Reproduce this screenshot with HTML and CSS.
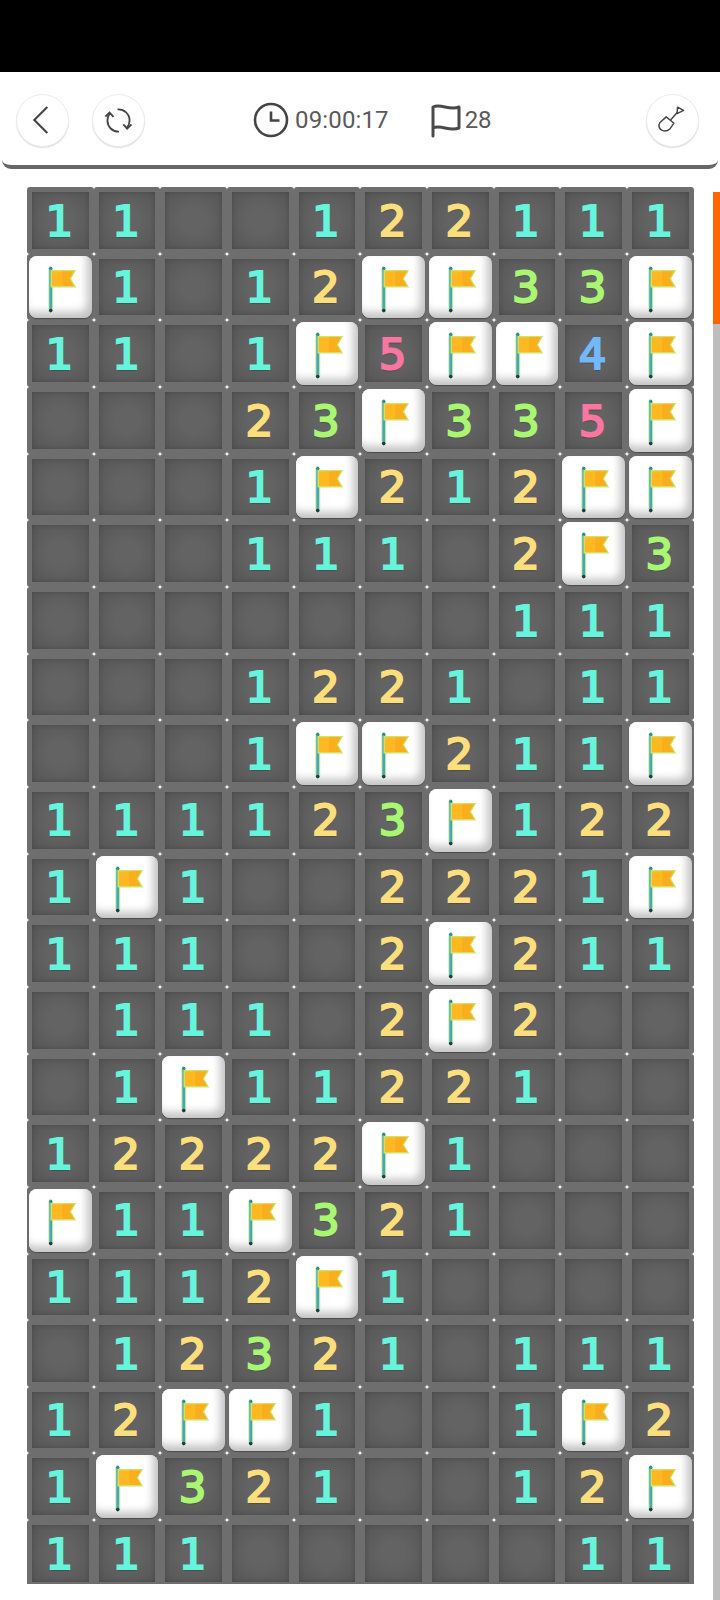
FILE: index.html
```html
<!DOCTYPE html>
<html lang="en">
<head>
<meta charset="utf-8">
<title>Minesweeper</title>
<link rel="stylesheet" href="styles.css">
</head>
<body>
<svg class="defs" width="0" height="0" aria-hidden="true">
  <symbol id="flag" viewBox="0 0 62 60">
    <path d="M21.500 11V53" class="flag-glow"/>
    <path d="M21.500 11V53" class="flag-pole"/>
    <circle cx="21.500" cy="53" r="1.800" fill="#1f3b3a"/>
    <circle cx="21.500" cy="11" r="1.600" fill="#2f8f86"/>
    <path d="M22 13.500H45.500L41 21.500L45.500 29.500H22Z" fill="#ffb81f" stroke="#cfe36a" stroke-width="1.400"/>
    <path d="M33 14.200H44.500L40 21.500L44.500 28.800H33Z" fill="#f9ae1d"/>
  </symbol>
</svg>
<div class="status-bar"></div>
<header class="toolbar">
  <button class="round-btn" aria-label="Back">
    <svg class="btn-icon" viewBox="0 0 53 53"><path d="M31.500 12.500L18 26L31.500 39.500"/></svg>
  </button>
  <button class="round-btn refresh" aria-label="Restart">
    <svg class="btn-icon thick" viewBox="0 0 53 53">
      <path d="M27 38C20 38.300 15 33 15 26.500C15 23.800 15.800 21.500 17.300 19.500"/>
      <path d="M12.800 22.500L17.200 18.300L21.300 22.800"/>
      <path d="M25.500 15C32.500 14.500 38 20 38 26.500C38 29.500 37 31.800 35.500 33.800"/>
      <path d="M40 30.500L35.500 35L31.500 30.500"/>
    </svg>
  </button>
  <div class="stats">
    <div class="stat">
      <svg class="clock" viewBox="0 0 36 36"><circle cx="18" cy="18" r="16"/><path d="M18 9.500V18.500H26.500"/></svg>
      <span>09:00:17</span>
    </div>
    <div class="stat">
      <svg class="flag-icon" viewBox="0 0 30 36"><path d="M2 34V5C10 1 18 9 28 5V26C18 30 10 22 2 26"/></svg>
      <span>28</span>
    </div>
  </div>
  <button class="round-btn shovel" aria-label="Dig">
    <svg class="btn-icon thin" viewBox="0 0 53 53">
      <path d="M20 22.700L13.500 28.500C11 32 13 36.500 17 37.300C20 37.800 22.500 36.500 24 35L28 29.300Z"/>
      <path d="M24.500 26L32 17.500"/>
      <path d="M31.700 12.700L38 16L31.300 19.300Z"/>
    </svg>
  </button>
</header>
<main class="game">
  <div class="board-wrap">
    <div class="board">
      <div class="cell n1">1</div><div class="cell n1">1</div><div class="cell"></div><div class="cell"></div><div class="cell n1">1</div><div class="cell n2">2</div><div class="cell n2">2</div><div class="cell n1">1</div><div class="cell n1">1</div><div class="cell n1">1</div>
      <div class="cell f"><svg class="tile"><use href="#flag"/></svg></div><div class="cell n1">1</div><div class="cell"></div><div class="cell n1">1</div><div class="cell n2">2</div><div class="cell f"><svg class="tile"><use href="#flag"/></svg></div><div class="cell f"><svg class="tile"><use href="#flag"/></svg></div><div class="cell n3">3</div><div class="cell n3">3</div><div class="cell f"><svg class="tile"><use href="#flag"/></svg></div>
      <div class="cell n1">1</div><div class="cell n1">1</div><div class="cell"></div><div class="cell n1">1</div><div class="cell f"><svg class="tile"><use href="#flag"/></svg></div><div class="cell n5">5</div><div class="cell f"><svg class="tile"><use href="#flag"/></svg></div><div class="cell f"><svg class="tile"><use href="#flag"/></svg></div><div class="cell n4">4</div><div class="cell f"><svg class="tile"><use href="#flag"/></svg></div>
      <div class="cell"></div><div class="cell"></div><div class="cell"></div><div class="cell n2">2</div><div class="cell n3">3</div><div class="cell f"><svg class="tile"><use href="#flag"/></svg></div><div class="cell n3">3</div><div class="cell n3">3</div><div class="cell n5">5</div><div class="cell f"><svg class="tile"><use href="#flag"/></svg></div>
      <div class="cell"></div><div class="cell"></div><div class="cell"></div><div class="cell n1">1</div><div class="cell f"><svg class="tile"><use href="#flag"/></svg></div><div class="cell n2">2</div><div class="cell n1">1</div><div class="cell n2">2</div><div class="cell f"><svg class="tile"><use href="#flag"/></svg></div><div class="cell f"><svg class="tile"><use href="#flag"/></svg></div>
      <div class="cell"></div><div class="cell"></div><div class="cell"></div><div class="cell n1">1</div><div class="cell n1">1</div><div class="cell n1">1</div><div class="cell"></div><div class="cell n2">2</div><div class="cell f"><svg class="tile"><use href="#flag"/></svg></div><div class="cell n3">3</div>
      <div class="cell"></div><div class="cell"></div><div class="cell"></div><div class="cell"></div><div class="cell"></div><div class="cell"></div><div class="cell"></div><div class="cell n1">1</div><div class="cell n1">1</div><div class="cell n1">1</div>
      <div class="cell"></div><div class="cell"></div><div class="cell"></div><div class="cell n1">1</div><div class="cell n2">2</div><div class="cell n2">2</div><div class="cell n1">1</div><div class="cell"></div><div class="cell n1">1</div><div class="cell n1">1</div>
      <div class="cell"></div><div class="cell"></div><div class="cell"></div><div class="cell n1">1</div><div class="cell f"><svg class="tile"><use href="#flag"/></svg></div><div class="cell f"><svg class="tile"><use href="#flag"/></svg></div><div class="cell n2">2</div><div class="cell n1">1</div><div class="cell n1">1</div><div class="cell f"><svg class="tile"><use href="#flag"/></svg></div>
      <div class="cell n1">1</div><div class="cell n1">1</div><div class="cell n1">1</div><div class="cell n1">1</div><div class="cell n2">2</div><div class="cell n3">3</div><div class="cell f"><svg class="tile"><use href="#flag"/></svg></div><div class="cell n1">1</div><div class="cell n2">2</div><div class="cell n2">2</div>
      <div class="cell n1">1</div><div class="cell f"><svg class="tile"><use href="#flag"/></svg></div><div class="cell n1">1</div><div class="cell"></div><div class="cell"></div><div class="cell n2">2</div><div class="cell n2">2</div><div class="cell n2">2</div><div class="cell n1">1</div><div class="cell f"><svg class="tile"><use href="#flag"/></svg></div>
      <div class="cell n1">1</div><div class="cell n1">1</div><div class="cell n1">1</div><div class="cell"></div><div class="cell"></div><div class="cell n2">2</div><div class="cell f"><svg class="tile"><use href="#flag"/></svg></div><div class="cell n2">2</div><div class="cell n1">1</div><div class="cell n1">1</div>
      <div class="cell"></div><div class="cell n1">1</div><div class="cell n1">1</div><div class="cell n1">1</div><div class="cell"></div><div class="cell n2">2</div><div class="cell f"><svg class="tile"><use href="#flag"/></svg></div><div class="cell n2">2</div><div class="cell"></div><div class="cell"></div>
      <div class="cell"></div><div class="cell n1">1</div><div class="cell f"><svg class="tile"><use href="#flag"/></svg></div><div class="cell n1">1</div><div class="cell n1">1</div><div class="cell n2">2</div><div class="cell n2">2</div><div class="cell n1">1</div><div class="cell"></div><div class="cell"></div>
      <div class="cell n1">1</div><div class="cell n2">2</div><div class="cell n2">2</div><div class="cell n2">2</div><div class="cell n2">2</div><div class="cell f"><svg class="tile"><use href="#flag"/></svg></div><div class="cell n1">1</div><div class="cell"></div><div class="cell"></div><div class="cell"></div>
      <div class="cell f"><svg class="tile"><use href="#flag"/></svg></div><div class="cell n1">1</div><div class="cell n1">1</div><div class="cell f"><svg class="tile"><use href="#flag"/></svg></div><div class="cell n3">3</div><div class="cell n2">2</div><div class="cell n1">1</div><div class="cell"></div><div class="cell"></div><div class="cell"></div>
      <div class="cell n1">1</div><div class="cell n1">1</div><div class="cell n1">1</div><div class="cell n2">2</div><div class="cell f"><svg class="tile"><use href="#flag"/></svg></div><div class="cell n1">1</div><div class="cell"></div><div class="cell"></div><div class="cell"></div><div class="cell"></div>
      <div class="cell"></div><div class="cell n1">1</div><div class="cell n2">2</div><div class="cell n3">3</div><div class="cell n2">2</div><div class="cell n1">1</div><div class="cell"></div><div class="cell n1">1</div><div class="cell n1">1</div><div class="cell n1">1</div>
      <div class="cell n1">1</div><div class="cell n2">2</div><div class="cell f"><svg class="tile"><use href="#flag"/></svg></div><div class="cell f"><svg class="tile"><use href="#flag"/></svg></div><div class="cell n1">1</div><div class="cell"></div><div class="cell"></div><div class="cell n1">1</div><div class="cell f"><svg class="tile"><use href="#flag"/></svg></div><div class="cell n2">2</div>
      <div class="cell n1">1</div><div class="cell f"><svg class="tile"><use href="#flag"/></svg></div><div class="cell n3">3</div><div class="cell n2">2</div><div class="cell n1">1</div><div class="cell"></div><div class="cell"></div><div class="cell n1">1</div><div class="cell n2">2</div><div class="cell f"><svg class="tile"><use href="#flag"/></svg></div>
      <div class="cell n1">1</div><div class="cell n1">1</div><div class="cell n1">1</div><div class="cell"></div><div class="cell"></div><div class="cell"></div><div class="cell"></div><div class="cell"></div><div class="cell n1">1</div><div class="cell n1">1</div>
    </div>
  </div>
  <div class="scroll-track"><div class="scroll-thumb"></div></div>
</main>
</body>
</html>
```
FILE: styles.css
```css
* { box-sizing: border-box; }
html, body { margin: 0; padding: 0; background: #fff; }
body {
  width: 720px;
  height: 1600px;
  overflow: hidden;
  font-family: Roboto, "Liberation Sans", sans-serif;
}
.defs { position: absolute; }
.status-bar { height: 72px; background: #000; }
.toolbar {
  display: flex;
  align-items: center;
  height: 97px;
  margin: 0 2px;
  padding: 3px 19px 0 14px;
  background: #fff;
  border-bottom: 4px solid #676767;
  border-radius: 0 0 9px 9px;
}
.round-btn {
  flex: none;
  width: 53px;
  height: 53px;
  padding: 0;
  border: 1px solid #ececec;
  border-radius: 50%;
  background: #fff;
  box-shadow: 0 1px 1px #ddd;
}
.refresh { margin-left: 23px; }
.shovel { margin-left: auto; }
.btn-icon {
  display: block;
  width: 51px;
  height: 51px;
  fill: none;
  stroke: #444;
  stroke-width: 2.2;
}
.thick { stroke-width: 1.9; }
.thin { stroke-width: 1.5; stroke-linejoin: round; }
.stats {
  display: flex;
  align-items: center;
  gap: 42px;
  margin-left: 108px;
}
.stat {
  display: flex;
  align-items: center;
  gap: 6px;
  font-size: 24px;
  letter-spacing: .15px;
  color: #5a5a5a;
}
.stat + .stat { gap: 4px; letter-spacing: -.2px; }
.clock { width: 36px; height: 36px; fill: none; stroke: #444; stroke-width: 2.6; }
.flag-icon { width: 30px; height: 36px; fill: none; stroke: #4a4a4a; stroke-width: 3; stroke-linecap: round; stroke-linejoin: round; }
.game {
  display: flex;
  align-items: flex-start;
  gap: 19px;
  padding: 18px 0 0 27px;
}
.board-wrap { flex: none; width: 666.7px; height: 1396.5px; overflow: hidden; }
.board {
  display: grid;
  grid-template-columns: repeat(10, 66.67px);
  grid-auto-rows: 66.67px;
}
.cell {
  display: flex;
  align-items: center;
  justify-content: center;
  padding: 2px 2px 0 0;
  border: 5px solid #6e6e6e;
  border-radius: 3px;
  background: radial-gradient(circle, #636363 30%, #565656 100%);
  box-shadow: inset 0 0 5px rgba(0, 0, 0, .18);
  font-family: "DejaVu Sans", sans-serif;
  font-size: 43.5px;
  line-height: 1;
  -webkit-text-stroke: 2.1px currentColor;
  text-shadow: 0 2px 1px rgba(0, 0, 0, .2);
}
.n1 { color: #66f4dc; }
.n2 { color: #fcdf7c; }
.n3 { color: #a9f672; }
.n4 { color: #72b8fa; }
.n5 { color: #f976a2; }
.f {
  border: 0;
  padding: 2px;
  background: #6e6e6e;
  box-shadow: none;
}
.tile {
  display: block;
  width: 100%;
  height: 100%;
  border-radius: 8px;
  background: #fff;
  box-shadow: inset -5px -6px 9px rgba(0, 0, 0, .24), inset 3px 3px 4px #fff, 0 1px 1px #4a4a4a;
}
.flag-glow { fill: none; stroke: #cdf0ae; stroke-width: 5; }
.flag-pole { fill: none; stroke: #4aa6b0; stroke-width: 2.8; }
.scroll-track { flex: none; width: 7px; height: 1408px; margin-top: 5px; background: #bdbdbd; }
.scroll-thumb { height: 132px; background: #ff6600; }
```
